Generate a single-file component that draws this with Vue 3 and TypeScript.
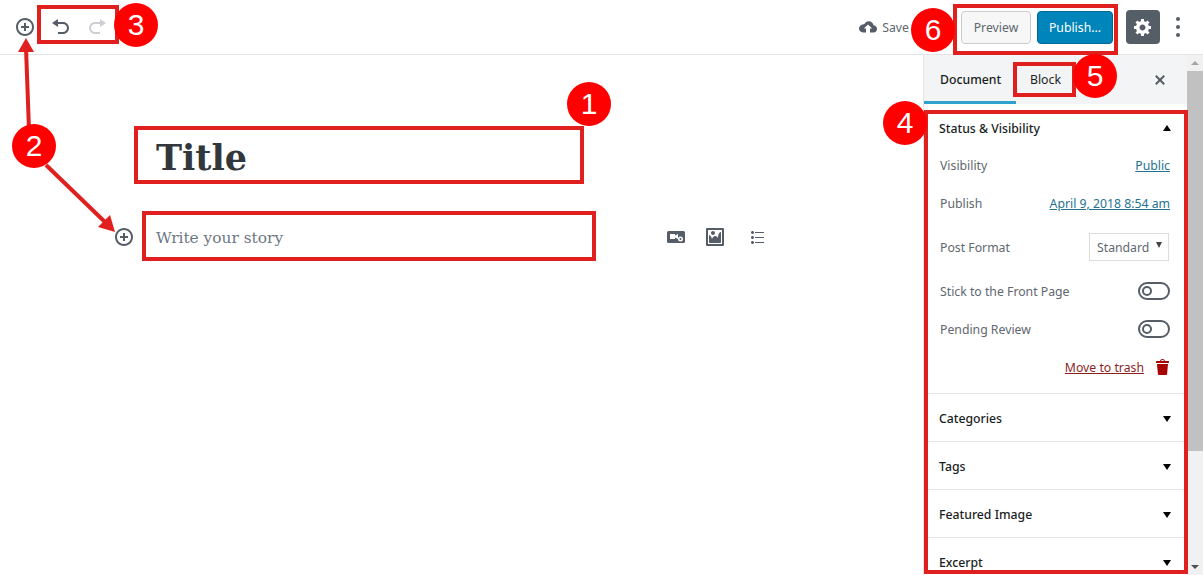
<script setup lang="ts">
interface Marker {
  label: string
  x: number
  y: number
}

interface Box {
  left: number
  top: number
  width: number
  height: number
}

// Numbered callouts drawn over the screenshot
const markers: Marker[] = [
  { label: '1', x: 589, y: 104 },
  { label: '2', x: 34, y: 146 },
  { label: '3', x: 136, y: 25 },
  { label: '4', x: 905, y: 123 },
  { label: '5', x: 1095, y: 76 },
  { label: '6', x: 933, y: 30 }
]

const boxes: Box[] = [
  { left: 134, top: 126, width: 450, height: 58 },
  { left: 142, top: 211, width: 454, height: 50 },
  { left: 37, top: 5, width: 82, height: 39 },
  { left: 924, top: 110, width: 264, height: 464 },
  { left: 1013, top: 62, width: 63, height: 35 },
  { left: 953, top: 4, width: 165, height: 51 }
]

const collapsedPanels = ['Categories', 'Tags', 'Featured Image', 'Excerpt']

const insertPath =
  'M10 1c-5 0-9 4-9 9s4 9 9 9 9-4 9-9-4-9-9-9zm0 16c-3.9 0-7-3.1-7-7s3.1-7 7-7 7 3.1 7 7-3.1 7-7 7zm1-11H9v3H6v2h3v3h2v-3h3V9h-3V6z'

const boxStyle = (b: Box) => ({
  left: `${b.left}px`,
  top: `${b.top}px`,
  width: `${b.width}px`,
  height: `${b.height}px`
})

const markerStyle = (m: Marker) => ({
  left: `${m.x - 22}px`,
  top: `${m.y - 22}px`
})
</script>

<template>
  <div class="editor-page">
    <header class="top-bar">
      <div class="tools">
        <svg class="icon" viewBox="0 0 20 20" width="20" height="20"><path :d="insertPath" /></svg>
        <svg class="icon" viewBox="0 0 20 20" width="20" height="20">
          <path d="M12 5H7V2L1 6l6 4V7h5c2.2 0 4 1.8 4 4s-1.8 4-4 4H7v2h5c3.3 0 6-2.7 6-6s-2.7-6-6-6z" />
        </svg>
        <svg class="icon redo" viewBox="0 0 20 20" width="20" height="20">
          <path d="M8 5h5V2l6 4-6 4V7H8c-2.2 0-4 1.8-4 4s1.8 4 4 4h5v2H8c-3.3 0-6-2.7-6-6s2.7-6 6-6z" />
        </svg>
      </div>
      <div class="actions">
        <span class="save">
          <svg viewBox="0 0 20 20" width="20" height="20">
            <path d="M15.6 8.3C15.2 5.9 13.2 4.2 10.8 4.2c-1.900 0-3.600 1.100-4.400 2.800C4.200 7.200 1 8.700 1 11.600c0 2.300 1.800 3.900 4 3.900h3v-4H5.800L10 7.400l4.200 4.100H12v4h3.500c2 0 3.500-1.600 3.500-3.600 0-1.900-1.500-3.400-3.400-3.600z" />
          </svg>
          Save
        </span>
        <button class="btn preview" type="button">Preview</button>
        <button class="btn publish" type="button">Publish...</button>
        <span class="settings">
          <svg viewBox="0 0 20 20" width="20" height="20">
            <path d="M18 12h-2.180c-.17.7-.44 1.350-.81 1.930l1.540 1.540-2.100 2.100-1.540-1.540c-.58.36-1.230.63-1.910.79V19H8v-2.180c-.68-.16-1.330-.43-1.910-.79l-1.540 1.540-2.120-2.120 1.540-1.540c-.36-.58-.63-1.230-.79-1.910H1V9.030h2.170c.16-.7.44-1.350.8-1.940L2.430 5.550l2.100-2.100 1.540 1.540c.58-.37 1.240-.64 1.930-.81V2h3v2.180c.68.16 1.330.43 1.910.79l1.540-1.540 2.120 2.120-1.540 1.540c.36.59.64 1.240.8 1.940H18V12zm-8.500 1.500c1.660 0 3-1.340 3-3s-1.340-3-3-3-3 1.340-3 3 1.340 3 3 3z" />
          </svg>
        </span>
        <span class="kebab"><i></i><i></i><i></i></span>
      </div>
    </header>

    <div class="workspace">
      <main class="editor">
        <h1 class="title">Title</h1>
        <div class="story-row">
          <svg class="icon" viewBox="0 0 20 20" width="20" height="20"><path :d="insertPath" /></svg>
          <p class="story">Write your story</p>
          <div class="block-icons">
            <svg viewBox="0 0 20 20" width="20" height="20">
              <path fill-rule="evenodd" d="M2.500 4h15A1.500 1.500 0 0 1 19 5.500v9a1.500 1.500 0 0 1-1.500 1.500h-15A1.500 1.500 0 0 1 1 14.500v-9A1.500 1.500 0 0 1 2.500 4zM4 7v5h5V10.500l3 1.500V7L9 8.500V7zM14.500 9.500a2.500 2.500 0 1 0 0 5 2.500 2.500 0 0 0 0-5zm0 1.500a1 1 0 1 1 0 2 1 1 0 0 1 0-2z" />
            </svg>
            <svg viewBox="0 0 20 20" width="20" height="20">
              <path d="M2.250 1h15.500c.69 0 1.250.56 1.250 1.250v15.500c0 .69-.56 1.250-1.250 1.250H2.250C1.560 19 1 18.440 1 17.750V2.250C1 1.560 1.560 1 2.250 1zM17 17V3H3v14h14zM10 6c0-1.100-.9-2-2-2s-2 .9-2 2 .9 2 2 2 2-.9 2-2zm3 5s0-6 3-6v10c0 .55-.45 1-1 1H5c-.55 0-1-.45-1-1V8c2 0 3 4 3 4s1-3 3-3 3 2 3 2z" />
            </svg>
            <svg class="list-icon" viewBox="0 0 20 20" width="20" height="20">
              <path d="M5.500 7C4.670 7 4 6.330 4 5.500 4 4.680 4.670 4 5.500 4 6.320 4 7 4.680 7 5.500 7 6.330 6.320 7 5.500 7zM8 5h9v1H8V5zm-2.500 7c-.83 0-1.500-.67-1.500-1.500C4 9.680 4.670 9 5.500 9c.82 0 1.500.68 1.500 1.500 0 .83-.68 1.500-1.500 1.500zM8 10h9v1H8v-1zm-2.500 7c-.83 0-1.500-.67-1.500-1.500 0-.82.67-1.500 1.500-1.500.82 0 1.500.68 1.500 1.500 0 .83-.68 1.500-1.500 1.500zM8 15h9v1H8v-1z" />
            </svg>
          </div>
        </div>
      </main>

      <aside class="sidebar">
        <div class="sidebar-scroll">
          <div class="tabs">
            <span class="tab active">Document</span>
            <span class="tab">Block</span>
            <svg class="close" viewBox="0 0 20 20" width="20" height="20">
              <path d="M14.950 6.460L11.410 10l3.540 3.540-1.410 1.410L10 11.420l-3.530 3.530-1.420-1.420L8.580 10 5.050 6.470l1.420-1.420L10 8.580l3.540-3.530z" />
            </svg>
          </div>

          <section class="panel">
            <div class="panel-head first">
              Status &amp; Visibility
              <span class="caret up"></span>
            </div>
            <div class="panel-body">
              <div class="row">
                <span>Visibility</span>
                <a class="link">Public</a>
              </div>
              <div class="row">
                <span>Publish</span>
                <a class="link">April 9, 2018 8:54 am</a>
              </div>
              <div class="row wide">
                <span>Post Format</span>
                <span class="select">Standard<span class="select-caret"></span></span>
              </div>
              <div class="row">
                <span>Stick to the Front Page</span>
                <span class="toggle"></span>
              </div>
              <div class="row">
                <span>Pending Review</span>
                <span class="toggle"></span>
              </div>
              <div class="row trash">
                <a class="trash-link">Move to trash</a>
                <svg viewBox="0 0 20 20" width="20" height="20">
                  <path d="M12 4h3c.6 0 1 .4 1 1v1H3V5c0-.6.5-1 1-1h3c.2-1.100 1.300-2 2.500-2s2.300.9 2.500 2zM8 4h3c-.2-.6-.9-1-1.500-1S8.200 3.400 8 4zM4 7h11l-.9 10.100c0 .5-.5.9-1 .9H5.900c-.5 0-.9-.4-1-.9L4 7z" />
                </svg>
              </div>
            </div>
          </section>

          <section v-for="name in collapsedPanels" :key="name" class="panel">
            <div class="panel-head">
              {{ name }}
              <span class="caret"></span>
            </div>
          </section>
        </div>

        <div class="scrollbar">
          <span class="arrow up"></span>
          <span class="thumb"></span>
          <span class="arrow down"></span>
        </div>
      </aside>
    </div>

    <!-- Annotations laid over the screenshot -->
    <svg class="arrows" width="1203" height="575" viewBox="0 0 1203 575">
      <g stroke="#e0201f" stroke-width="4" fill="#e0201f">
        <line x1="29" y1="130" x2="26" y2="48" />
        <line x1="46" y1="165" x2="106" y2="223" />
        <path stroke="none" d="M26 38l8 14H18z" />
        <path stroke="none" d="M115 232l-17-5 12-12z" />
      </g>
    </svg>
    <div v-for="(b, i) in boxes" :key="i" class="note-box" :style="boxStyle(b)"></div>
    <div v-for="m in markers" :key="m.label" class="marker" :style="markerStyle(m)">{{ m.label }}</div>
  </div>
</template>

<style>
html,
body {
  margin: 0;
  overflow: hidden;
}
</style>

<style scoped>
.editor-page {
  position: relative;
  width: 1203px;
  height: 575px;
  overflow: hidden;
  background: #fff;
  font-family: "Noto Sans", "Open Sans", sans-serif;
  font-size: 12.250px;
  color: #60676e;
}

.top-bar {
  display: flex;
  justify-content: space-between;
  align-items: center;
  height: 54px;
  padding: 0 15px;
  border-bottom: 1px solid #e2e4e7;
}

.tools {
  display: flex;
  align-items: center;
  gap: 16px;
}

.icon {
  fill: #555d66;
  flex: none;
}

.redo {
  fill: #ccd0d4;
}

.actions {
  display: flex;
  align-items: center;
}

.save {
  display: flex;
  align-items: center;
  gap: 4px;
  margin-right: 52px;
}

.save svg {
  fill: #555d66;
}

.btn {
  height: 33px;
  border-radius: 4px;
  font-family: inherit;
  font-size: 12.250px;
  padding: 0;
}

.preview {
  width: 70px;
  margin-right: 6px;
  background: #f7f7f7;
  border: 1px solid #ccc;
  color: #60676e;
}

.publish {
  width: 76px;
  margin-right: 13px;
  background: #0085ba;
  border: 1px solid #006a95;
  color: #fff;
}

.settings {
  display: flex;
  align-items: center;
  justify-content: center;
  width: 34px;
  height: 34px;
  border-radius: 4px;
  background: #555d66;
  margin-right: 16px;
}

.settings svg {
  fill: #fff;
}

.kebab {
  display: flex;
  flex-direction: column;
  gap: 4px;
  width: 4px;
  margin-right: 8px;
}

.kebab i {
  width: 4px;
  height: 4px;
  border-radius: 50%;
  background: #555d66;
}

.workspace {
  display: flex;
  height: 520px;
}

.editor {
  flex: 1;
  padding: 71px 0 0 114px;
}

.title {
  margin: 0 0 34px 42px;
  padding-top: 1px;
  font-family: "DejaVu Serif", serif;
  font-size: 35px;
  line-height: 61px;
  font-weight: 700;
  color: #32373c;
}

.story-row {
  display: flex;
  align-items: center;
  height: 30px;
}

.story {
  width: 510px;
  margin: 1px 0 0 22px;
  font-family: "DejaVu Serif", serif;
  font-size: 15.400px;
  color: #6c7781;
}

.block-icons {
  display: flex;
  gap: 19px;
}

.block-icons svg {
  fill: #555d66;
}

.block-icons .list-icon {
  margin-left: 3px;
}

.sidebar {
  display: flex;
  width: 280px;
  height: 520px;
}

.sidebar-scroll {
  flex: 1;
  overflow: hidden;
  border-left: 1px solid #e2e4e7;
}

.tabs {
  display: flex;
  align-items: center;
  height: 49px;
  background: #f3f4f5;
}

.tab {
  height: 49px;
  padding: 0 14px;
  box-sizing: border-box;
  color: #191e23;
  line-height: 49px;
}

.tab.active {
  width: 92px;
  padding: 0 16px;
  font-weight: 500;
  border-bottom: 3px solid #2ea2cc;
}

.close {
  fill: #555d66;
  margin-left: auto;
  margin-right: 17px;
}

.panel {
  border-bottom: 1px solid #e2e4e7;
  background: #fff;
}

.panel-head {
  display: flex;
  justify-content: space-between;
  align-items: center;
  box-sizing: border-box;
  height: 47px;
  padding: 2px 16px 0 15px;
  color: #191e23;
  font-weight: 500;
}

.panel-head.first {
  height: 48px;
  padding-top: 0;
}

.caret {
  width: 0;
  height: 0;
  border-left: 4.500px solid transparent;
  border-right: 4.500px solid transparent;
  border-top: 6px solid #000;
}

.caret.up {
  border-top: 0;
  border-bottom: 6px solid #000;
}

.panel-body {
  display: flex;
  flex-direction: column;
  gap: 12px;
  padding: 0 17px 13px 16px;
}

.row {
  display: flex;
  justify-content: space-between;
  align-items: center;
  height: 26px;
}

.row.wide {
  margin: 6px 0;
}

.link {
  color: #25728f;
  text-decoration: underline;
}

.select {
  display: flex;
  align-items: center;
  justify-content: space-between;
  box-sizing: border-box;
  width: 80px;
  height: 28px;
  margin-right: 1px;
  padding: 0 6px 0 7px;
  border: 1px solid #ddd;
  color: #60676e;
}

.select-caret {
  width: 0;
  height: 0;
  margin-bottom: 4px;
  border-left: 3.500px solid transparent;
  border-right: 3.500px solid transparent;
  border-top: 6px solid #444;
}

.toggle {
  position: relative;
  box-sizing: border-box;
  width: 32px;
  height: 18px;
  border: 2px solid #555d66;
  border-radius: 9px;
}

.toggle::before {
  content: "";
  position: absolute;
  left: 2px;
  top: 2px;
  width: 10px;
  height: 10px;
  box-sizing: border-box;
  border: 2px solid #555d66;
  border-radius: 50%;
}

.row.trash {
  justify-content: flex-end;
  gap: 9px;
}

.trash svg {
  fill: #a00;
  margin-right: -3px;
}

.trash-link {
  color: #8a1f1f;
  text-decoration: underline;
}

.scrollbar {
  display: flex;
  flex-direction: column;
  align-items: center;
  width: 16px;
  background: #f1f1f1;
}

.thumb {
  width: 100%;
  height: 380px;
  background: #c1c1c1;
}

.arrow {
  width: 0;
  height: 0;
  margin: 6px 0;
  border-left: 4px solid transparent;
  border-right: 4px solid transparent;
}

.arrow.up {
  border-bottom: 4px solid #a3a3a3;
}

.arrow.down {
  margin-top: auto;
  border-top: 4px solid #505050;
}

.arrows {
  position: absolute;
  left: 0;
  top: 0;
  pointer-events: none;
}

.note-box {
  position: absolute;
  box-sizing: border-box;
  border: 4px solid #e0201f;
  pointer-events: none;
}

.marker {
  position: absolute;
  width: 44px;
  height: 44px;
  border-radius: 50%;
  background: #f00;
  color: #fff;
  font-family: "Liberation Sans", sans-serif;
  font-size: 30px;
  line-height: 44px;
  text-align: center;
}
</style>
